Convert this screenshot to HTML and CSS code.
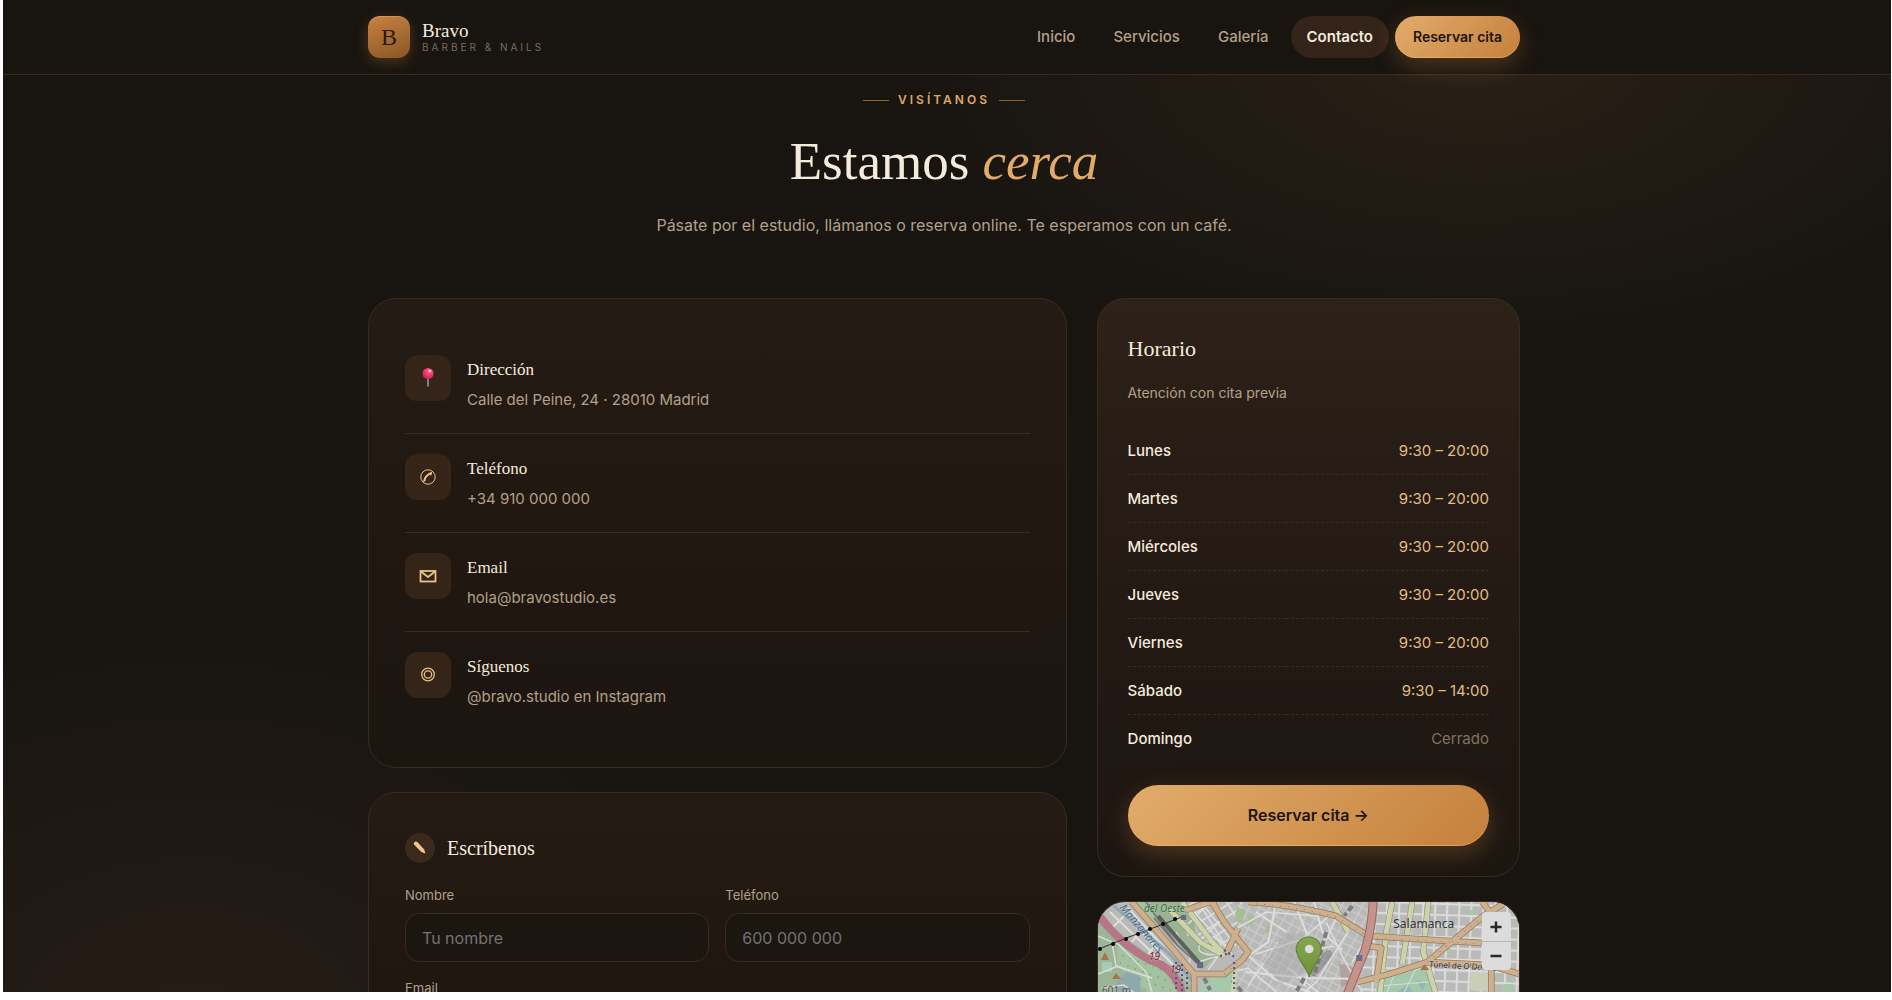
FILE: index.html
```
<!DOCTYPE html>
<html lang="es">
  <head>
    <meta charset="UTF-8" />
    <meta name="viewport" content="width=device-width, initial-scale=1.0" />
    <title>Contacto - Bravo Barber &amp; Nails</title>
    <link rel="stylesheet" href="styles.css">
  </head>
  <body>
    <div class="page">
      <header class="site-header">
        <div class="container header-inner">
          <a class="brand" href="#">
            <span class="brand-mark">B</span>
            <span class="brand-text">
              <span class="brand-name">Bravo</span>
              <span class="brand-tag">BARBER &amp; NAILS</span>
            </span>
          </a>
          <nav>
            <a href="#">Inicio</a>
            <a href="#">Servicios</a>
            <a href="#">Galería</a>
            <a href="#" class="active">Contacto</a>
            <a href="#" class="btn btn-small">Reservar cita</a>
          </nav>
        </div>
      </header>

      <main>
        <div class="container">
          <section class="intro">
            <p class="eyebrow">VISÍTANOS</p>
            <h1>Estamos <em>cerca</em></h1>
            <p class="lead">Pásate por el estudio, llámanos o reserva online. Te esperamos con un café.</p>
          </section>

          <div class="contact-grid">
            <div class="column">
              <section class="card">
                <ul class="info-list">
                  <li>
                    <span class="info-icon">
                      <svg width="22" height="22" viewBox="0 0 22 22">
                        <defs>
                          <radialGradient id="ball" cx="0.6" cy="0.3" r="0.7">
                            <stop offset="0" stop-color="#ff6f95" />
                            <stop offset="0.5" stop-color="#f23a6c" />
                            <stop offset="1" stop-color="#c81f55" />
                          </radialGradient>
                        </defs>
                        <path d="M10.2 11h1.6v8l-.8 1-.8-1z" fill="#9d93a0" />
                        <circle cx="11" cy="6.500" r="5.600" fill="url(#ball)" />
                        <ellipse cx="12.800" cy="3.900" rx="1.500" ry="1.200" fill="#ffd0dc" />
                      </svg>
                    </span>
                    <div>
                      <h3>Dirección</h3>
                      <p>Calle del Peine, 24 · 28010 Madrid</p>
                    </div>
                  </li>
                  <li>
                    <span class="info-icon">
                      <svg width="22" height="22" viewBox="0 0 22 22" fill="none" stroke="#e8c088">
                        <circle cx="11" cy="11" r="7.200" />
                        <path d="M6.600 15.600c.4-3.900 4-8.200 8.400-9.300" stroke-width="1.300" />
                        <path d="M6.800 15.600l1.800-.5.200-1.900c.9-1.800 2-3 3.700-4.100l1.700.3 1-2.400-2.400-.2c-3.400 1.500-5.600 4.500-6 8.800z" fill="#e8c088" stroke="none" />
                      </svg>
                    </span>
                    <div>
                      <h3>Teléfono</h3>
                      <p>+34 910 000 000</p>
                    </div>
                  </li>
                  <li>
                    <span class="info-icon">
                      <svg width="22" height="22" viewBox="0 0 22 22" fill="none" stroke="#e8c088" stroke-width="1.800">
                        <rect x="3.500" y="6" width="15" height="10.500" />
                        <path d="M4 6.500l7 5.500 7-5.500" />
                      </svg>
                    </span>
                    <div>
                      <h3>Email</h3>
                      <p>hola@bravostudio.es</p>
                    </div>
                  </li>
                  <li>
                    <span class="info-icon">
                      <svg width="22" height="22" viewBox="0 0 22 22" fill="none" stroke="#e8c088" stroke-width="1.300">
                        <circle cx="11" cy="10.500" r="6.300" />
                        <circle cx="11" cy="10.500" r="3.700" />
                      </svg>
                    </span>
                    <div>
                      <h3>Síguenos</h3>
                      <p>@bravo.studio en Instagram</p>
                    </div>
                  </li>
                </ul>
              </section>

              <section class="card">
                <h2 class="form-title">
                  <span class="form-icon">
                    <svg width="18" height="18" viewBox="0 0 18 18">
                      <path d="M3.300 3.300c.8-1 2.100-1.100 3-.2l6.900 7.300 1.200 4.200-4-1.500L3.400 6c-.8-.8-.8-1.900-.1-2.700z" fill="#efc78d" />
                    </svg>
                  </span>
                  Escríbenos
                </h2>
                <form class="form">
                  <div class="form-row">
                    <div class="form-group">
                      <label for="nombre">Nombre</label>
                      <input type="text" id="nombre" placeholder="Tu nombre" />
                    </div>
                    <div class="form-group">
                      <label for="telefono">Teléfono</label>
                      <input type="tel" id="telefono" placeholder="600 000 000" />
                    </div>
                  </div>
                  <div class="form-group">
                    <label for="email">Email</label>
                    <input type="email" id="email" />
                  </div>
                </form>
              </section>
            </div>

            <aside class="column">
              <section class="card hours-card">
                <h2>Horario</h2>
                <p class="hours-note">Atención con cita previa</p>
                <table class="hours">
                  <tr><th scope="row">Lunes</th><td>9:30 – 20:00</td></tr>
                  <tr><th scope="row">Martes</th><td>9:30 – 20:00</td></tr>
                  <tr><th scope="row">Miércoles</th><td>9:30 – 20:00</td></tr>
                  <tr><th scope="row">Jueves</th><td>9:30 – 20:00</td></tr>
                  <tr><th scope="row">Viernes</th><td>9:30 – 20:00</td></tr>
                  <tr><th scope="row">Sábado</th><td>9:30 – 14:00</td></tr>
                  <tr><th scope="row">Domingo</th><td class="closed">Cerrado</td></tr>
                </table>
                <a href="#" class="btn btn-large">Reservar cita →</a>
              </section>

              <section class="map">
                <svg class="map-canvas" viewBox="0 0 421 300" preserveAspectRatio="xMidYMin slice">
                  <defs>
                    <pattern id="gridA" width="12" height="11" patternUnits="userSpaceOnUse" patternTransform="rotate(2)">
                      <path d="M0 1h12M1 0v11" stroke="#dcdcdc" stroke-width="2" />
                    </pattern>
                    <pattern id="gridB" width="9" height="8" patternUnits="userSpaceOnUse" patternTransform="rotate(28)">
                      <path d="M0 1h9M1 0v8" stroke="#cdcdcd" stroke-width="1.200" />
                    </pattern>
                    <pattern id="gridC" width="12" height="10" patternUnits="userSpaceOnUse" patternTransform="rotate(-32)">
                      <path d="M0 1h12M1 0v10" stroke="#dadada" stroke-width="1.800" />
                    </pattern>
                    <pattern id="trees" width="8" height="8" patternUnits="userSpaceOnUse" patternTransform="rotate(20)">
                      <circle cx="2" cy="2" r="0.700" fill="#5f8a62" />
                    </pattern>
                    <linearGradient id="pin" x1="0" y1="0" x2="0" y2="1">
                      <stop offset="0" stop-color="#86a553" />
                      <stop offset="1" stop-color="#6b9433" />
                    </linearGradient>
                  </defs>
                  <rect width="421" height="300" fill="#b9b9b8" />
                  <path d="M140 0h140L258 90v210H140z" fill="url(#gridB)" />
                  <path d="M70 0h75l-15 55-24-5z" fill="url(#gridC)" />
                  <path d="M270 0h151v300H245z" fill="url(#gridA)" />

                  <!-- parks -->
                  <path d="M0 20L45 48 76 66 98 90v210H0z" fill="#9bb596" />
                  <path d="M18 36l48 22 17 32H50L20 65z" fill="#a2c2a0" />
                  <path d="M18 36l48 22 17 32H50L20 65z" fill="url(#trees)" />
                  <path d="M44 0h44l10 18-2 16 22 20-14 14-42-46z" fill="#9bb393" />
                  <path d="M34 0h12l18 24-8 4z" fill="#a3c2a0" />
                  <path d="M103 43l20-4 4 10-18 6z" fill="#a9bcab" />
                  <path d="M103 81l20-11 14-6v36H98z" fill="#a6c8ac" />
                  <path d="M278 78l48-12 14 36h-62z" fill="#a4c8ab" />
                  <path d="M296 92l14-10 6 10zM318 78l10 3-4 8z" fill="#91b9b0" />
                  <path d="M372 70l22 2v18l-22-2z" fill="#cacdb8" />
                  <path d="M18 82l10-12 14 4v18H18z" fill="#8fa8ab" />
                  <path d="M4 60h10v10H4z" fill="#a7cbb2" />
                  <path d="M139 5l8 3-3 14-8-4zM151 13l7 2-4 10-7-3zM170 22l5 3-4 8-4-3z" fill="#a6bd98" />
                  <path d="M241 62l12 2 4 12-14 10z" fill="#b3a2a0" />
                  <path d="M405 82h10v8h-10zM344 44h8v5h-8zM368 8h8v5h-8z" fill="#a6c8a6" />

                  <!-- footpaths -->
                  <g fill="none" stroke="#d9dcd8" stroke-width="1.500">
                    <path d="M0 34l14 6 4 24 36 12M0 72l20-8M18 40l30 30 6 20M4 86l22-3 16 12" />
                    <path d="M78 30l14 26-2 8M90 34l-2-14M100 60l20-6-10 14" />
                    <path d="M101 38c8-6 20-4 22 6s-14 10-20 6 2-8-2-12" />
                    <path d="M288 92l8-20M306 90l12-24M280 84l50-4" stroke-width="1" />
                  </g>
                  <g fill="none" stroke="#dedede" stroke-width="2">
                    <path d="M20 6l56 58M12 10l54 52M30 6l40 44M14 26l12-12M34 40l10-14M50 52l10-12M148 52l30 26 34 12M148 70l60 6 60 1" />
                    <path d="M178 0l-8 40-20 14M196 0l20 50-10 34M216 0l8 30 20 18" />
                    <path d="M256 20l-38 60-16 14M240 12l-22 48M158 10l30 20M132 30l36-20 50 4M158 52l44-14 34-28" stroke-width="1.600" />
                    <path d="M150 84l30-44M190 66l30 24M228 20l16 34 20 36M120 74l30-8 40 34" stroke-width="1.500" />
                    <path d="M236 44l-34 6M254 60l14-24M96 10l38 42M106 4l32 40M90 22l20-20M104 36l22-20" stroke-width="1.500" />
                  </g>
                  <path d="M164 60l24-30 24 4 6 14-16 26-20 8z" fill="#a5a5a5" opacity="0.400" />

                  <!-- river and railway -->
                  <path d="M12 0q26 24 46 40 20 16 36 40" fill="none" stroke="#91a7b0" stroke-width="3" />
                  <path d="M48 0l14 20 18 24 22 20M56 16l20 24 26 24" fill="none" stroke="#747675" stroke-width="1.500" />
                  <path d="M60 14l14 16 28 32" fill="none" stroke="#5d605f" stroke-width="4" />
                  <path d="M106 76l6 12M134 78l10 12M206 76l-8 14M228 30l-12 44M254 4l-8 10" stroke="#7b7e80" stroke-width="4" stroke-dasharray="6 3" />

                  <!-- yellow roads -->
                  <g fill="none" stroke="#878b6d" stroke-width="6">
                    <path d="M84 0l30 40 14 14M70 6l32 34 24 14M234 0l16 30M294 0l-6 30-6 60M314 0l-10 62M330 0l-5 50 15 50" />
                  </g>
                  <g fill="none" stroke="#ccd2a9" stroke-width="5">
                    <path d="M84 0l30 40 14 14M70 6l32 34 24 14M234 0l16 30M294 0l-6 30-6 60M314 0l-10 62M330 0l-5 50 15 50M138 60l-4 40" />
                  </g>

                  <!-- orange roads -->
                  <g fill="none" stroke="#977b56" stroke-width="6.500" stroke-linejoin="round">
                    <path d="M34 0l28 32 34 40h30l18-14 6-8-24-30-12-20" />
                    <path d="M88 8l30-10M128 52l12-26M150 0q40 2 88 14l32 20 114 7M421 72l-30-9-62-3-38 12-32 8M270 44l13 2-5 34M329 60l56-46 36-22M384 0l15 20M393 60v40M96 72v30" />
                  </g>
                  <g fill="none" stroke="#cfb08e" stroke-width="5" stroke-linejoin="round">
                    <path d="M34 0l28 32 34 40h30l18-14 6-8-24-30-12-20" />
                    <path d="M88 8l30-10M128 52l12-26M150 0q40 2 88 14l32 20 114 7M421 72l-30-9-62-3-38 12-32 8M270 44l13 2-5 34M329 60l56-46 36-22M384 0l15 20M393 60v40M96 72v30" />
                  </g>
                  <g fill="none" stroke="#7f79a0" stroke-width="1" stroke-dasharray="1 7">
                    <path d="M158 2q40 2 82 14l32 20 112 6M126 72l18-14M329 60l56-46" />
                  </g>

                  <!-- main avenues -->
                  <path d="M0 12q22 30 52 46 28 8 34 42" fill="none" stroke="#b77685" stroke-width="8" />
                  <path d="M275-2q-2 40-14 64-7 18-16 40" fill="none" stroke="#9d655f" stroke-width="9" />
                  <path d="M275-2q-2 40-14 64-7 18-16 40" fill="none" stroke="#c4938b" stroke-width="7" />
                  <path d="M78 60v30M84 62v30M89 70v20M122 54l10-3M126 48l12 8M136 60v40" stroke="#4f4b96" stroke-width="2" stroke-dasharray="2 3" />

                  <!-- cable car -->
                  <path d="M1 47L31 35 84 15" fill="none" stroke="#3d3d3d" stroke-width="1" />
                  <g>
                    <circle cx="2" cy="47" r="2" /><circle cx="15" cy="42" r="2" />
                    <circle cx="28" cy="37" r="2" /><circle cx="40" cy="32" r="2" />
                    <circle cx="52" cy="27" r="2" /><circle cx="65" cy="22" r="2" />
                    <circle cx="77" cy="17" r="2" />
                  </g>
                  <path d="M83 13h5v5h-5zM99 60h6v6h-6zM258 53h6v6h-6z" fill="#666b8c" />
                  <path d="M3 58l4-8 4 8zM14 77l4-6 5 6zM322 68l4-6 5 6z" fill="#a8744e" />

                  <g class="map-labels">
                    <text x="46" y="10" class="label-park">del Oeste</text>
                    <text x="0" y="0" class="label-river" transform="translate(21 6) rotate(49)">Manzanares</text>
                    <text x="51" y="58" class="label-exit">19</text>
                    <text x="72" y="71" class="label-exit">19</text>
                    <text x="4" y="92" class="label-small">601 m</text>
                    <text x="295" y="26" class="label-area">Salamanca</text>
                    <text x="331" y="65" class="label-tunnel" transform="rotate(3 331 65)">Túnel de O'Donnell</text>
                  </g>

                  <!-- marker -->
                  <path d="M216 70l14-18" stroke="#737573" stroke-width="8" stroke-linecap="round" opacity="0.500" />
                  <path d="M211 75c-2-9-13-18-13-28a12.500 12 0 0 1 25 0c0 10-10 19-12 28z" fill="url(#pin)" stroke="#647e35" />
                  <circle cx="211" cy="47" r="4.300" fill="#dcdcdc" />
                </svg>
                <div class="map-zoom">
                  <button type="button" aria-label="Acercar"><svg width="14" height="14"><path d="M7 1.500v11M1.500 7h11" stroke="#292929" stroke-width="2.500" /></svg></button>
                  <button type="button" aria-label="Alejar"><svg width="14" height="14"><path d="M1.500 7h11" stroke="#292929" stroke-width="2.500" /></svg></button>
                </div>
              </section>
            </aside>
          </div>
        </div>
      </main>
    </div>
  </body>
</html>
```
FILE: styles.css
```
* {
  box-sizing: border-box;
}

body {
  margin: 0;
  height: 100vh;
  padding: 0 1px 8px 3px;
  background-color: #fff;
  font-family: Inter, "Open Sans", sans-serif;
  font-size: 15px;
  color: #f5ebdd;
}

h1,
h2,
h3,
p,
ul {
  margin: 0;
  padding: 0;
}

h1,
h2,
h3 {
  font-family: "Liberation Serif", serif;
  font-weight: 400;
}

a {
  color: inherit;
  text-decoration: none;
}

.page {
  height: 100%;
  overflow: hidden;
  background:
    radial-gradient(ellipse 560px 280px at 78% 6%, rgba(200, 129, 63, 0.1), transparent),
    radial-gradient(ellipse 560px 400px at 10% 104%, rgba(160, 90, 60, 0.11), transparent),
    #181511;
}

/* Header */
.site-header {
  background-color: #18140f;
  border-bottom: 1px solid #3b2b1d;
  padding: 16px 30px 16px 24px;
}

main {
  padding: 0 30px 0 24px;
}

.container {
  max-width: 1152px;
  margin: 0 auto;
}

.header-inner {
  display: flex;
  justify-content: space-between;
  align-items: center;
}

.brand {
  display: flex;
  align-items: center;
  gap: 12px;
}

.brand-mark {
  display: grid;
  place-items: center;
  width: 42px;
  height: 42px;
  border-radius: 12px;
  background: linear-gradient(160deg, #c8833f, #8b5628);
  box-shadow: 0 4px 14px rgba(200, 131, 63, 0.3), inset 0 1px 0 rgba(255, 255, 255, 0.2);
  color: #2a1a0d;
  font-family: "Liberation Serif", serif;
  font-size: 24px;
}

.brand-text {
  display: flex;
  flex-direction: column;
}

.brand-name {
  font-family: "Liberation Serif", serif;
  font-size: 19px;
  line-height: 20px;
}

.brand-tag {
  font-size: 10px;
  line-height: 12px;
  letter-spacing: 3px;
  color: #7b6b5a;
}

nav {
  display: flex;
  align-items: center;
  gap: 6px;
}

nav a {
  padding: 0 16px;
  border-radius: 21px;
  font-size: 15px;
  font-weight: 500;
  line-height: 42px;
  color: #b3a08a;
}

nav .active {
  background-color: #332318;
  color: #f5ebdd;
  font-weight: 600;
}

.btn {
  display: block;
  text-align: center;
  font-weight: 600;
  color: #1d140c;
  background: linear-gradient(135deg, #e2ac6b, #c5803c);
  box-shadow: 0 8px 24px rgba(200, 131, 63, 0.3), inset 0 -1px 0 rgba(255, 190, 110, 0.5);
}

nav .btn-small {
  padding: 0 18px;
  font-size: 14px;
  color: #1d140c;
}

.btn-large {
  margin-top: 23px;
  border-radius: 31px;
  font-size: 16px;
  line-height: 61px;
}

/* Intro */
.intro {
  padding: 15px 0 60px;
  text-align: center;
}

.eyebrow {
  display: flex;
  justify-content: center;
  align-items: center;
  gap: 9px;
  font-size: 12px;
  line-height: 20px;
  font-weight: 600;
  letter-spacing: 3px;
  color: #dfa866;
}

.eyebrow::before,
.eyebrow::after {
  content: "";
  width: 26px;
  height: 1px;
  background-color: #95602f;
}

h1 {
  padding-top: 11px;
  font-size: 53px;
  line-height: 80px;
}

h1 em {
  color: #e2ab69;
}

.lead {
  padding-top: 11px;
  font-size: 16px;
  line-height: 26px;
  color: #b3a08a;
}

/* Cards */
.contact-grid {
  display: grid;
  grid-template-columns: 165fr 100fr;
  gap: 30px;
  align-items: start;
}

.column {
  display: flex;
  flex-direction: column;
  gap: 24px;
}

.card {
  padding: 36px;
  border: 1px solid #3b2b1d;
  border-radius: 28px;
  background: linear-gradient(180deg, #251b15, #201711 60%, #1b1610);
}

.info-list {
  list-style: none;
  padding-bottom: 1px;
}

.info-list li {
  display: flex;
  align-items: flex-start;
  gap: 16px;
  padding: 20px 0;
  border-bottom: 1px solid #3b2b1d;
}

.info-list li:last-child {
  border-bottom: none;
}

.info-icon {
  display: grid;
  place-items: center;
  width: 46px;
  height: 46px;
  border-radius: 12px;
  background-color: #352418;
}

.info-list h3 {
  font-size: 17px;
  line-height: 30px;
}

.info-list p {
  padding-top: 2px;
  line-height: 26px;
  color: #b3a08a;
}

/* Form */
.form-title {
  display: flex;
  align-items: center;
  gap: 12px;
  font-size: 20px;
  line-height: 38px;
}

.form-icon {
  display: grid;
  place-items: center;
  width: 30px;
  height: 30px;
  border-radius: 50%;
  background-color: #3b2a1b;
}

.form {
  display: flex;
  flex-direction: column;
  gap: 16px;
  padding-top: 18px;
}

.form-row {
  display: grid;
  grid-template-columns: 1fr 1fr;
  gap: 16px;
}

.form-group label {
  display: block;
  padding-bottom: 8px;
  font-size: 13px;
  line-height: 20px;
  color: #b3a08a;
}

.form-group input {
  width: 100%;
  height: 49px;
  padding: 0 16px;
  border: 1px solid #3b2b1d;
  border-radius: 14px;
  background-color: #1b1610;
  color: #f5ebdd;
  font-family: inherit;
  font-size: 16px;
}

.form-group input::placeholder {
  color: #757270;
}

/* Opening hours */
.hours-card {
  padding: 30px;
  background: linear-gradient(180deg, #2d2118, #241a14 50%, #1c1611);
}

.hours-card h2 {
  font-size: 22px;
  line-height: 40px;
}

.hours-note {
  padding: 11px 0 21px;
  font-size: 14px;
  line-height: 26px;
  color: #b3a08a;
}

.hours {
  width: 100%;
  border-collapse: collapse;
  line-height: 23px;
}

.hours th,
.hours td {
  padding: 12px 0;
  border-bottom: 1px dashed #3b2b1d;
}

.hours tr:last-child th,
.hours tr:last-child td {
  border-bottom: none;
}

.hours th {
  text-align: left;
  font-weight: 500;
}

.hours td {
  text-align: right;
  color: #e3bd86;
}

.hours .closed {
  color: #827260;
}

/* Map */
.map {
  position: relative;
  height: 300px;
  overflow: hidden;
  border: 1px solid #3b2b1d;
  border-radius: 28px;
}

.map-canvas {
  display: block;
  width: 100%;
  height: 100%;
}

.map-labels {
  font-family: "Noto Sans", sans-serif;
  paint-order: stroke;
  stroke: rgba(205, 205, 205, 0.5);
  stroke-width: 1px;
}

.label-park {
  font-size: 10px;
  font-style: italic;
  fill: #2f7042;
}

.label-river {
  font-size: 11px;
  font-style: italic;
  fill: #44708f;
}

.label-exit {
  font-size: 10px;
  font-style: italic;
  fill: #7d2633;
}

.label-small {
  font-size: 10px;
  fill: #4f4f4a;
}

.label-area {
  font-size: 12px;
  fill: #33333c;
}

.label-tunnel {
  font-size: 8px;
  fill: #292929;
}

.map-zoom {
  position: absolute;
  top: 10px;
  right: 8px;
  width: 29px;
  border-radius: 4px;
  overflow: hidden;
}

.map-zoom button {
  display: grid;
  place-items: center;
  width: 100%;
  height: 29px;
  padding: 0;
  border: none;
  background-color: #dcdcdc;
  cursor: pointer;
}

.map-zoom button + button {
  border-top: 1px solid #b5b5b5;
}

@media (max-width: 900px) {
  .contact-grid {
    grid-template-columns: 1fr;
  }
}
```
